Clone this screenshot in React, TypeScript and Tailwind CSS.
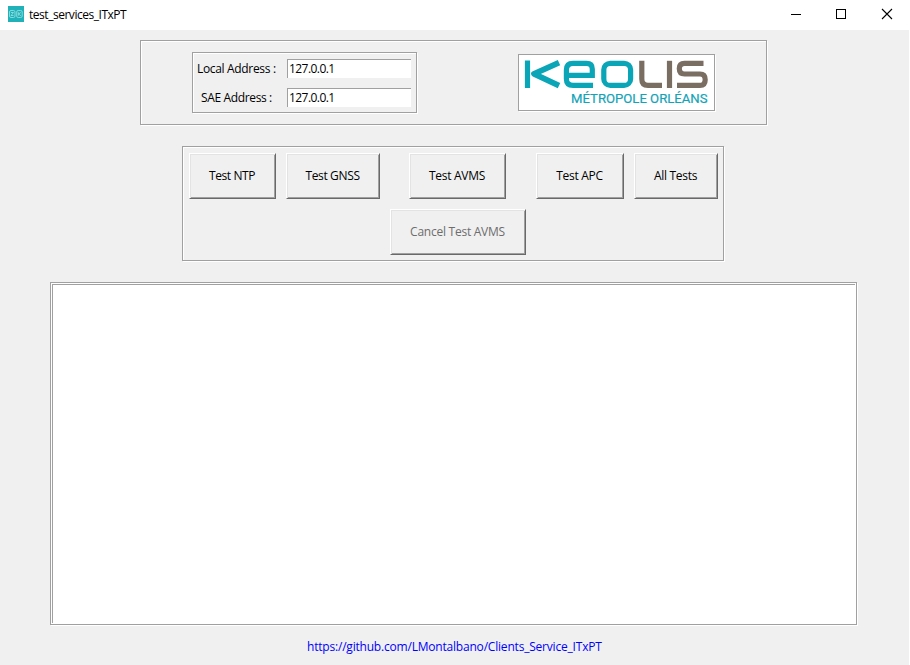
import type { ReactNode } from "react";

const groove =
  "border border-[#a0a0a0] shadow-[1px_1px_0_#fff,inset_1px_1px_0_#fff]";

function RaisedButton({
  className,
  children,
  disabled = false,
}: {
  className: string;
  children: ReactNode;
  disabled?: boolean;
}) {
  return (
    <button
      disabled={disabled}
      className={`flex h-[46px] shrink-0 items-center justify-center whitespace-nowrap border border-t-white border-l-white border-r-[#696969] border-b-[#696969] pr-px pb-px shadow-[inset_1px_1px_0_#e3e3e3,inset_-1px_-1px_0_#a0a0a0] ${
        disabled ? "text-[#6d6d6d]" : "text-black"
      } ${className}`}
    >
      {children}
    </button>
  );
}

function AddressRow({ label, className }: { label: string; className: string }) {
  return (
    <div className="flex h-[19px] items-center">
      <div className={`w-[94px] whitespace-pre ${className}`}>{label}</div>
      <div className="h-[19px] w-[124px] border-t border-l border-[#a0a0a0] bg-white pl-px leading-[18px] tracking-[-0.55px]">
        127.0.0.1
      </div>
    </div>
  );
}

function AppIcon() {
  return (
    <svg width="16" height="16" viewBox="0 0 16 16" fill="none">
      <rect width="16" height="16" fill="#20b2b8" />
      <g stroke="#8edfe0" strokeWidth="0.9">
        <rect x="1.5" y="4.5" width="5.5" height="7" rx="1.5" />
        <rect x="8.7" y="4.5" width="5.5" height="7" rx="1.5" />
        <path d="M3 6.5h2.5L3 9.5h2.5M12.8 6.5L10.5 8l2.3 1.7M10.3 6.2v3.5" />
      </g>
    </svg>
  );
}

function KeolisLogo() {
  return (
    <svg width="195" height="55" viewBox="519 55 195 55" fill="none">
      <g stroke="#0ba5b8" strokeWidth="5.2">
        <path d="M527.5 60.5V88" />
        <path d="M559 62.6L534 73.9L559 85.6" strokeLinejoin="round" strokeWidth="5.8" />
        <path d="M566 75.3H592.3V69Q592.3 63.3 586.5 63.3H573Q566.4 63.3 566.4 70V79Q566.4 85.4 573 85.4H593" />
        <rect x="603.8" y="63.3" width="26.8" height="22.1" rx="6.5" />
      </g>
      <g stroke="#7a6d61" strokeWidth="5.2">
        <path d="M641.8 60.8V79Q641.8 85.4 648 85.4H662" />
        <path d="M669.5 60.8V88" />
        <path d="M703.5 63.3H684.5Q679.3 63.3 679.3 68.5Q679.3 74 684.5 74H700Q705.2 74 705.2 79.7Q705.2 85.4 700 85.4H677" />
      </g>
      <text
        x="571"
        y="103"
        fill="#12a3b8"
        stroke="#12a3b8"
        strokeWidth="0.2"
        textLength="136.5"
        lengthAdjust="spacingAndGlyphs"
        className="font-['Roboto',sans-serif] text-[13.5px]"
      >
        MÉTROPOLE ORLÉANS
      </text>
    </svg>
  );
}

export default function App() {
  return (
    <div className="flex h-[665px] w-[910px] flex-col overflow-hidden border-r border-white bg-[#f0f0f0] font-['Open_Sans','Noto_Sans',sans-serif] text-[12px] leading-4 text-black">
      <header className="flex h-[30px] shrink-0 items-center bg-white">
        <div className="flex items-center gap-[5px] pb-[2px] pl-2">
          <AppIcon />
          <span className="pt-[2px] tracking-[-0.47px]">test_services_ITxPT</span>
        </div>
        <svg
          className="ml-auto"
          width="139"
          height="30"
          viewBox="770 0 139 30"
          fill="none"
          stroke="#000"
        >
          <path d="M791 14.5H801" />
          <rect x="836.5" y="9.5" width="9" height="9" />
          <path d="M882 9L892 19M892 9L882 19" strokeWidth="1.1" />
        </svg>
      </header>

      <section className={`mt-[10px] ml-[140px] flex h-[85px] w-[627px] shrink-0 items-start ${groove}`}>
        <div className={`mt-[11px] ml-[51px] flex h-[61px] w-[225px] flex-col gap-[10px] pt-[6px] ${groove}`}>
          <AddressRow label="Local Address :" className="pl-1 tracking-[-0.33px]" />
          <AddressRow label="SAE Address :" className="pl-2 tracking-[-0.36px]" />
        </div>
        <div className="mt-[13px] ml-[101px] h-[57px] w-[197px] border border-[#a0a0a0] bg-white shadow-[1px_1px_0_#fff]">
          <KeolisLogo />
        </div>
      </section>

      <section className={`mt-[21px] ml-[182px] flex h-[115px] w-[542px] shrink-0 flex-col gap-[10px] pt-[6px] pl-[6px] ${groove}`}>
        <div className="flex">
          <RaisedButton className="w-[87px] tracking-[-0.4px]">Test NTP</RaisedButton>
          <RaisedButton className="ml-[10px] w-[94px] tracking-[-0.35px]">Test GNSS</RaisedButton>
          <RaisedButton className="ml-[29px] w-[97px] tracking-[-0.3px]">Test AVMS</RaisedButton>
          <RaisedButton className="ml-[30px] w-[88px] tracking-[-0.3px]">Test APC</RaisedButton>
          <RaisedButton className="ml-[10px] w-[84px] tracking-[-0.3px]">All Tests</RaisedButton>
        </div>
        <RaisedButton disabled className="ml-[201px] w-[136px] tracking-[-0.25px]">
          Cancel Test AVMS
        </RaisedButton>
      </section>

      <main className={`mt-[21px] ml-[50px] h-[343px] w-[807px] shrink-0 bg-white p-px ${groove}`}>
        <div className="h-full w-full border-t border-l border-[#a0a0a0]" />
      </main>

      <footer className="mt-[14px] pl-[307px] whitespace-nowrap text-[#0000ff]">
        <a className="tracking-[-0.2px]">https://github.com/LMontalbano/Clients_Service_ITxPT</a>
      </footer>
    </div>
  );
}
